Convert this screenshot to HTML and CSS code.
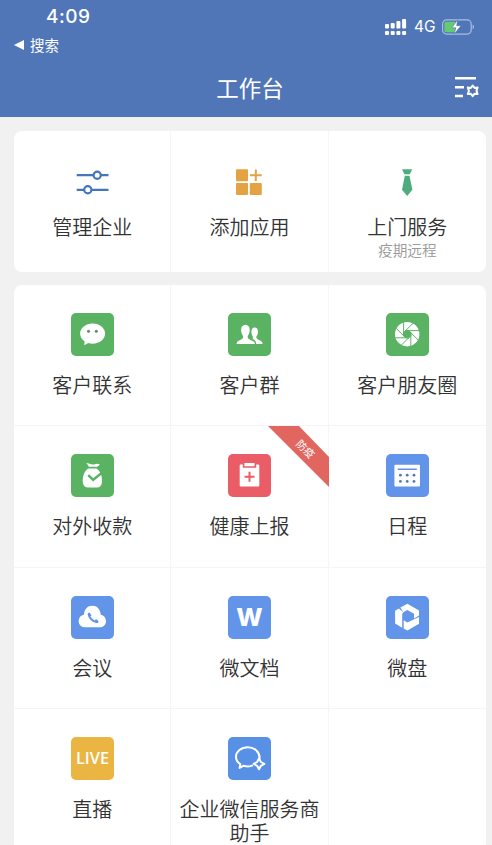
FILE: index.html
```
<!DOCTYPE html>
<html lang="zh-CN">
<head>
    <meta charset="UTF-8">
    <meta name="viewport" content="width=device-width, initial-scale=1.0">
    <title>工作台</title>
    <link rel="stylesheet" href="styles.css">
</head>
<body>
    <header class="header">
        <div class="status-bar">
            <div class="status-left">
                <div class="time">4:09</div>
                <div class="back">
                    <svg width="10" height="10" viewBox="0 0 10 10"><path d="M0 5L10 0V10Z" fill="#fff"/></svg>
                    <span>搜索</span>
                </div>
            </div>
            <div class="status-right">
                <svg width="22" height="17" viewBox="0 0 22 17" fill="#fff">
                    <rect x="0" y="5" width="4" height="4.5" rx="1"/>
                    <rect x="5.7" y="4" width="4" height="5.5" rx="1"/>
                    <rect x="11.4" y="2" width="4" height="7.5" rx="1"/>
                    <rect x="17.1" y="0" width="4" height="9.5" rx="1"/>
                    <rect x="0" y="12" width="4" height="4" rx="1"/>
                    <rect x="5.7" y="12" width="4" height="4" rx="1"/>
                    <rect x="11.4" y="12" width="4" height="4" rx="1"/>
                    <rect x="17.1" y="12" width="4" height="4" rx="1"/>
                </svg>
                <span class="network">4G</span>
                <svg width="33" height="16" viewBox="0 0 33 16">
                    <rect x=".6" y=".9" width="28.6" height="14.2" rx="4" fill="none" stroke="#a9bde0" stroke-width="1.2"/>
                    <path d="M30.6 5.5C32.5 6.5 32.5 9.5 30.6 10.5Z" fill="#a9bde0"/>
                    <path d="M4 2.8H13V13.2H4Q2.4 13.2 2.4 11.6V4.4Q2.4 2.8 4 2.8Z" fill="#65cb72"/>
                    <path d="M15.6 .8L9.8 8.8H13.8L12.2 15L19 6.7H14.7Z" fill="#fff" stroke="#5076b7" stroke-width=".6"/>
                </svg>
            </div>
        </div>
        <div class="title-bar">
            <h1>工作台</h1>
            <svg class="settings" width="26" height="24" viewBox="0 0 26 24" fill="none" stroke="#fff" stroke-width="2.4">
                <path d="M1 2.2H22M1 11.2H10M1 20H9"/>
                <path d="M18.7 9.6L20.6 11.9L23.6 11.5L22.5 14.8L23.6 18L20.6 17.7L18.7 20.2L16.8 17.7L13.8 18L14.9 14.8L13.8 11.5L16.8 11.9Z" stroke-width="2" stroke-linejoin="round"/>
            </svg>
        </div>
    </header>

    <main>
        <section class="card tools">
            <div class="cell">
                <svg class="icon" width="43" height="43" viewBox="0 0 43 43" fill="none" stroke="#4476b9" stroke-width="2.2">
                    <path d="M5.7 14.2H22.5M30 14.2H37.5M5.7 28.8H13M20.7 28.8H37.5"/>
                    <circle cx="26.2" cy="14.2" r="3.6"/>
                    <circle cx="16.8" cy="28.8" r="3.6"/>
                </svg>
                <div class="label">管理企业</div>
            </div>
            <div class="cell">
                <svg class="icon" width="43" height="43" viewBox="0 0 43 43" fill="#e4a343">
                    <rect x="8" y="8.3" width="12" height="12" rx="1"/>
                    <rect x="8" y="21.9" width="12" height="12" rx="1"/>
                    <rect x="21.8" y="21.9" width="12" height="12" rx="1"/>
                    <path d="M27.8 8.5V20M21.9 14.2H33.7" stroke="#e4a343" stroke-width="2"/>
                </svg>
                <div class="label">添加应用</div>
            </div>
            <div class="cell">
                <svg class="icon" width="43" height="43" viewBox="0 0 43 43" fill="#4fac7c">
                    <path d="M16 8.2H26.2L23.8 13.2H18.4Z"/>
                    <path d="M18.8 14.8H23.5L26.4 28.8L21.2 35L16 28.8Z"/>
                </svg>
                <div class="label">上门服务</div>
                <div class="hint">疫期远程</div>
            </div>
        </section>

        <section class="card apps">
            <div class="cell">
                <svg class="icon green" width="43" height="43" viewBox="0 0 43 43">
                    <path d="M21.6 10.5C14.6 10.5 9.1 15 9.1 20.6C9.1 23.8 10.8 26.6 13.6 28.5L13.2 32.2L17.2 30.1C18.6 30.5 20 30.7 21.6 30.7C28.6 30.7 34.1 26.2 34.1 20.6C34.1 15 28.6 10.5 21.6 10.5Z" fill="#fff"/>
                    <g fill="#5a8f68"><circle cx="17.5" cy="18.2" r="1.5"/><circle cx="25.3" cy="18.2" r="1.5"/></g>
                </svg>
                <div class="label">客户联系</div>
            </div>
            <div class="cell">
                <svg class="icon green" width="43" height="43" viewBox="0 0 43 43" fill="#fff">
                    <path d="M26.7 14.6C29 14.6 30 16.4 30 18.8C30 20.8 29.2 22.4 28.4 23.6C28 25.4 29 26 31.4 27.2C33.8 28.4 34.5 29 34.6 31H28.2C28.2 28.6 27 27.2 24.6 25.8C24.8 24.8 25 24.2 24.8 23.4C24 22.2 23.4 20.8 23.4 18.8C23.4 16.4 24.4 14.6 26.7 14.6Z"/>
                    <path d="M17.4 11.8C20.2 11.8 21.7 14 21.7 17C21.7 19.4 20.8 21.6 19.8 23C19.2 25.2 20.4 26 23 27.2C25.6 28.4 26.8 29 27 31H8.6C8.7 29 9.4 28.2 11.8 27.2C14.4 26 15.6 25.2 15 23C14 21.6 13.1 19.4 13.1 17C13.1 14 14.6 11.8 17.4 11.8Z"/>
                </svg>
                <div class="label">客户群</div>
            </div>
            <div class="cell">
                <svg class="icon green" width="43" height="43" viewBox="0 0 43 43">
                    <circle cx="21.2" cy="21.2" r="12.2" fill="#fff"/>
                    <g transform="translate(21.2 21.2)" fill="#5ab263" stroke="#5ab263" stroke-width="1">
                        <path d="M-1.5 -3.6L1.5 -3.6L3.6 -1.5L3.6 1.5L1.5 3.6L-1.5 3.6L-3.6 1.5L-3.6 -1.5Z"/>
                        <path d="M-1.5 -3.6H12M1.5 -3.6L11.1 6M3.6 -1.5V12M3.6 1.5L-6 11.1M1.5 3.6H-12M-1.5 3.6L-11.1 -6M-3.6 1.5V-12M-3.6 -1.5L6 -11.1"/>
                    </g>
                </svg>
                <div class="label">客户朋友圈</div>
            </div>

            <div class="cell">
                <svg class="icon green" width="43" height="43" viewBox="0 0 43 43">
                    <path d="M15.2 9.5C18 8.4 20 11.2 23 10.4C25 9.8 26.8 9.2 28.8 10.6C27.5 12.6 26 13.1 23.8 12.8H18.2C16.8 12.4 18 11.2 15.2 9.5Z" fill="#fff"/>
                    <path d="M17 14.4H25.6C29.2 17 31 21 31 26.4C31 31.4 29 33.6 25 33.6H18C13.8 33.6 11.7 31.4 11.7 26.4C11.7 21 13.6 17 17 14.4Z" fill="#fff"/>
                    <path d="M17.2 21.2L22.2 25.8L31.4 18.4" fill="none" stroke="#5ab263" stroke-width="2.4"/>
                </svg>
                <div class="label">对外收款</div>
            </div>
            <div class="cell">
                <svg class="ribbon" width="61" height="61" viewBox="0 0 61 61">
                    <path d="M0 0H31L61 31V61Z" fill="#e0665f"/>
                    <text class="ribbon-text" x="0" y="4" transform="translate(37.5 23) rotate(45)">防疫</text>
                </svg>
                <svg class="icon red" width="43" height="43" viewBox="0 0 43 43">
                    <rect x="11.7" y="10.4" width="19.6" height="22" rx="1" fill="#fff"/>
                    <path d="M15.6 9V13H27.4V9" fill="#fff" stroke="#ea5d67" stroke-width="1.6"/>
                    <path d="M21.5 17.8V27.8M16.5 22.8H26.5" stroke="#ea5d67" stroke-width="2"/>
                </svg>
                <div class="label">健康上报</div>
            </div>
            <div class="cell">
                <svg class="icon blue" width="43" height="43" viewBox="0 0 43 43">
                    <rect x="8.4" y="10.7" width="25.6" height="21.7" rx="1" fill="#fff"/>
                    <path d="M11.7 15.2H30.8" stroke="#6295e9" stroke-width="1.5"/>
                    <g fill="#5279bd">
                        <circle cx="14.4" cy="21.2" r="1.4"/><circle cx="21.2" cy="21.2" r="1.4"/><circle cx="28" cy="21.2" r="1.4"/>
                        <circle cx="14.4" cy="27.4" r="1.4"/><circle cx="21.2" cy="27.4" r="1.4"/><circle cx="28" cy="27.4" r="1.4"/>
                    </g>
                </svg>
                <div class="label">日程</div>
            </div>

            <div class="cell">
                <svg class="icon blue" width="43" height="43" viewBox="0 0 43 43">
                    <path d="M14.8 31.3C10.6 31.3 7.7 28.9 7.7 25.2C7.7 21.7 10 19.4 13 18.8C13.2 13.2 16.6 9.8 21.3 9.8C26 9.8 29.4 13.2 29.7 18.8C32.7 19.4 35 21.7 35 25.2C35 28.9 32.2 31.3 28 31.3Z" fill="#fff"/>
                    <path d="M18 17.2C17.2 19 18.2 21 20.4 23.2C22.8 25.6 25 26.7 27 25.8" fill="none" stroke="#6295e9" stroke-width="2"/>
                    <path d="M18.6 16.4L20.6 19.6L18.6 20.8L17 17.8ZM27.8 25.2L25 23L23.4 25L26 26.8Z" fill="#6295e9"/>
                </svg>
                <div class="label">会议</div>
            </div>
            <div class="cell">
                <svg class="icon blue" width="43" height="43" viewBox="0 0 43 43">
                    <text class="doc-letter" x="8.3" y="30" textLength="26.4" lengthAdjust="spacingAndGlyphs">W</text>
                </svg>
                <div class="label">微文档</div>
            </div>
            <div class="cell">
                <svg class="icon blue" width="43" height="43" viewBox="0 0 43 43" fill="#fff">
                    <path d="M14.4 11.5L21.4 7.8L33 14.4V19.6L28 22.4V17.8L21.3 13.9L17.2 16.2Z"/>
                    <path d="M12.9 12.4L17.4 16.5L16.2 18V31.8L9.1 27.6V14.8Z"/>
                    <path d="M17.7 24.3L21.3 26.6L33 21V27.7L21.4 34.4L17.7 32.4Z"/>
                </svg>
                <div class="label">微盘</div>
            </div>

            <div class="cell">
                <svg class="icon yellow" width="43" height="43" viewBox="0 0 43 43">
                    <text class="live-text" x="5" y="27.3" textLength="33" lengthAdjust="spacingAndGlyphs">LIVE</text>
                </svg>
                <div class="label">直播</div>
            </div>
            <div class="cell">
                <svg class="icon blue-dark" width="43" height="43" viewBox="0 0 43 43" fill="none" stroke="#fff" stroke-width="2" stroke-linejoin="round">
                    <path d="M31.6 21.8C32 15 26.6 10.2 19.8 10.2C13.2 10.2 8 14.3 8 19.8C8 23 9.6 25.4 12.3 27.2L11.6 31L15.6 28.7C18.6 29.7 22 29.6 25 28.4"/>
                    <path d="M31 21.6L32.9 25L36.3 26.9L32.9 28.8L31 32.2L29.1 28.8L25.7 26.9L29.1 25Z"/>
                </svg>
                <div class="label">企业微信服务商助手</div>
            </div>
            <div class="cell"></div>
        </section>
    </main>
</body>
</html>
```
FILE: styles.css
```
* {
    box-sizing: border-box;
}
body {
    margin: 0;
    height: 845px;
    overflow: hidden;
    background: #f1f1f2;
    color: #333;
    font-family: "Noto Sans CJK SC", sans-serif;
}
svg {
    display: block;
    flex-shrink: 0;
}
.header {
    height: 117px;
    background: #5076b7;
    color: #fff;
}
.status-bar {
    display: flex;
    justify-content: space-between;
    height: 60px;
    padding: 5px 17px 0 14px;
}
.time {
    padding-left: 32px;
    font: 500 19px/24px Inter, sans-serif;
    letter-spacing: 0.5px;
}
.back {
    display: flex;
    align-items: center;
    gap: 6px;
    height: 20px;
    margin-top: 6px;
    font-size: 14.5px;
    line-height: 20px;
}
.status-right {
    display: flex;
    align-items: center;
    gap: 7px;
    height: 44px;
}
.network {
    width: 21px;
    font: 15.5px/20px Inter, sans-serif;
    white-space: nowrap;
}
.title-bar {
    display: grid;
    grid-template-columns: 1fr auto 1fr;
    align-items: center;
    height: 55px;
    padding: 0 12px 0 20px;
}
h1 {
    grid-column: 2;
    margin: 0;
    font-size: 22.5px;
    font-weight: 400;
    line-height: 55px;
}
.settings {
    justify-self: end;
}
main {
    display: flex;
    flex-direction: column;
    gap: 13px;
    padding: 14px 6px 0 14px;
}
.card {
    display: grid;
    grid-template-columns: repeat(3, 1fr);
    background: #fff;
    border-radius: 8px;
    overflow: hidden;
}
.tools {
    grid-template-rows: 141px;
}
.apps {
    grid-template-rows: 141px 142px 141px 142px;
}
.cell {
    position: relative;
    display: flex;
    flex-direction: column;
    align-items: center;
    padding: 28px 6px 0;
    border-right: 1px solid #f5f5f6;
    border-bottom: 1px solid #f5f5f6;
}
.cell:nth-child(3n) {
    border-right: none;
}
.tools .cell {
    padding-top: 30px;
    border-bottom: none;
}
.icon {
    border-radius: 5px;
}
.green {
    background: #5ab263;
}
.red {
    background: #ea5d67;
}
.blue {
    background: #6295e9;
}
.blue-dark {
    background: #5790e4;
}
.yellow {
    background: #ebb544;
}
.label {
    margin-top: 17px;
    font-size: 20px;
    font-weight: 350;
    line-height: 24px;
    text-align: center;
}
.tools .label {
    margin-top: 11px;
}
.hint {
    color: #999;
    font-size: 14.7px;
    font-weight: 350;
    line-height: 22px;
}
.ribbon {
    position: absolute;
    top: 0;
    right: -1px;
}
.ribbon-text {
    fill: #fff;
    font-size: 10.5px;
    text-anchor: middle;
}
.doc-letter {
    fill: #fff;
    font: 800 24px Inter, sans-serif;
}
.live-text {
    fill: #fff;
    font: 600 17px "Open Sans", sans-serif;
}
```
